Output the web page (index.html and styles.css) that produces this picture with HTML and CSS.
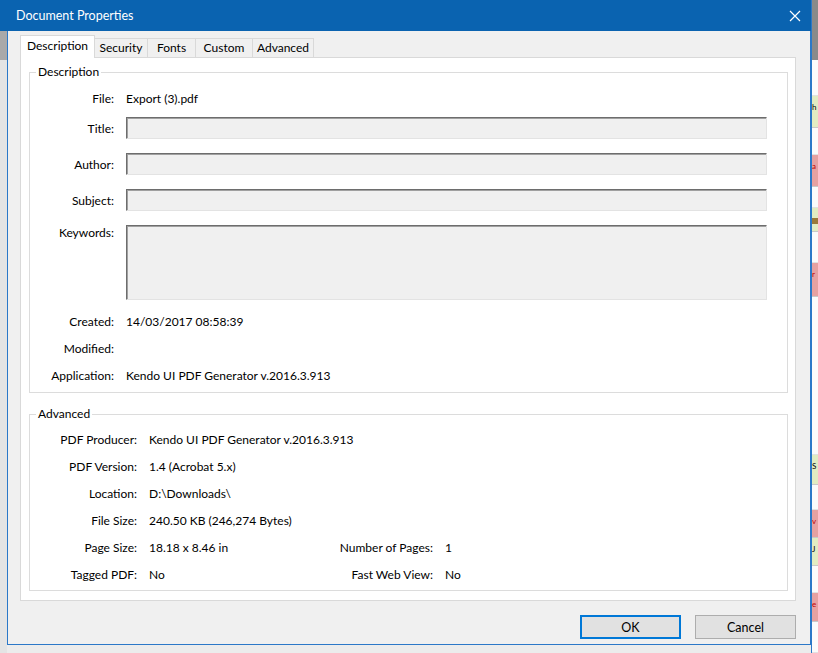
FILE: index.html
```html
<!DOCTYPE html>
<html lang="en">
<head>
    <meta charset="utf-8">
    <title>Document Properties</title>
    <link rel="stylesheet" href="styles.css">
</head>
<body>
    <div class="screen">
        <div class="window">
            <div class="titlebar">
                <span class="title">Document Properties</span>
                <svg class="close" width="12" height="12" viewBox="0 0 12 12">
                    <path d="M1 1 L11 11 M11 1 L1 11" stroke="#fff" stroke-width="1.2" fill="none"/>
                </svg>
            </div>
            <div class="frame">
                <div class="gutter"></div>
                <div class="dialog">
                    <div class="tabs">
                        <div class="tab tab-description active">Description</div>
                        <div class="tab tab-security">Security</div>
                        <div class="tab tab-fonts">Fonts</div>
                        <div class="tab tab-custom">Custom</div>
                        <div class="tab tab-advanced">Advanced</div>
                    </div>

                    <div class="panel">
                        <fieldset class="group desc">
                            <legend>Description</legend>
                            <div class="row first">
                                <span class="label">File:</span>
                                <span class="value">Export (3).pdf</span>
                            </div>
                            <div class="row input top">
                                <span class="label">Title:</span>
                                <div class="field"></div>
                            </div>
                            <div class="row input">
                                <span class="label">Author:</span>
                                <div class="field"></div>
                            </div>
                            <div class="row input">
                                <span class="label">Subject:</span>
                                <div class="field"></div>
                            </div>
                            <div class="row input keywords">
                                <span class="label">Keywords:</span>
                                <div class="field tall"></div>
                            </div>
                            <div class="row after">
                                <span class="label">Created:</span>
                                <span class="value">14/03/2017 08:58:39</span>
                            </div>
                            <div class="row">
                                <span class="label">Modified:</span>
                                <span class="value"></span>
                            </div>
                            <div class="row">
                                <span class="label">Application:</span>
                                <span class="value">Kendo UI PDF Generator v.2016.3.913</span>
                            </div>
                        </fieldset>

                        <fieldset class="group adv">
                            <legend>Advanced</legend>
                            <div class="adv-grid">
                                <span class="label">PDF Producer:</span>
                                <span class="value wide">Kendo UI PDF Generator v.2016.3.913</span>

                                <span class="label">PDF Version:</span>
                                <span class="value wide">1.4 (Acrobat 5.x)</span>

                                <span class="label">Location:</span>
                                <span class="value wide">D:\Downloads\</span>

                                <span class="label">File Size:</span>
                                <span class="value wide">240.50 KB (246,274 Bytes)</span>

                                <span class="label">Page Size:</span>
                                <span class="value">18.18 x 8.46 in</span>
                                <span class="label">Number of Pages:</span>
                                <span class="value">1</span>

                                <span class="label">Tagged PDF:</span>
                                <span class="value">No</span>
                                <span class="label">Fast Web View:</span>
                                <span class="value">No</span>
                            </div>
                        </fieldset>
                    </div>

                    <div class="buttons">
                        <button class="btn default">OK</button>
                        <button class="btn">Cancel</button>
                    </div>
                </div>
            </div>
        </div>

        <!-- what shows of the app behind the dialog -->
        <div class="backdrop">
            <div class="cell dark" style="height: 60px"></div>
            <div class="cell" style="height: 36px"></div>
            <div class="cell green" style="height: 32px">h</div>
            <div class="cell" style="height: 27px"></div>
            <div class="cell red" style="height: 32px">a</div>
            <div class="cell" style="height: 21px"></div>
            <div class="cell green bar" style="height: 24px"></div>
            <div class="cell" style="height: 31px"></div>
            <div class="cell red" style="height: 34px">r</div>
            <div class="cell" style="height: 158px"></div>
            <div class="cell green" style="height: 30px">S</div>
            <div class="cell" style="height: 25px"></div>
            <div class="cell red" style="height: 28px">v</div>
            <div class="cell green" style="height: 28px">J</div>
            <div class="cell" style="height: 27px"></div>
            <div class="cell red" style="height: 29px">e</div>
            <div class="cell" style="height: 31px"></div>
        </div>
    </div>
</body>
</html>
```

FILE: styles.css
```css
* {
    box-sizing: border-box;
}

body {
    margin: 0;
    font-family: 'Lato', 'Noto Sans', sans-serif;
    font-size: 12px;
    color: #000;
    background-color: #f0f0f0;
}

.screen {
    display: flex;
    width: 818px;
    height: 653px;
    overflow: hidden;
}

.window {
    width: 811px;
    display: flex;
    flex-direction: column;
}

.titlebar {
    height: 31px;
    background-color: #0a63b0;
    color: #fff;
    display: flex;
    align-items: center;
    justify-content: space-between;
    padding: 0 10px 0 16px;
}

.title {
    font-size: 12.5px;
}

.frame {
    flex: 1;
    display: flex;
    background-color: #ececec;
}

.gutter {
    width: 7px;
    background: linear-gradient(#a9a9a9 0 29px, #e4e4e4 29px);
}

.dialog {
    width: 804px;
    height: 614px;
    background-color: #f0f0f0;
    border: 1px solid #2b78c8;
    border-top: none;
    display: flex;
    flex-direction: column;
}

/* tab strip */
.tabs {
    display: flex;
    align-items: flex-end;
    padding: 4px 0 0 12px;
    height: 26px;
}

.tab {
    height: 19px;
    line-height: 18px;
    text-align: center;
    background-color: #f0f0f0;
    border: 1px solid #d9d9d9;
    border-bottom: none;
    margin-left: -1px;
}

.tab:first-child {
    margin-left: 0;
}

.tab.active {
    height: 23px;
    line-height: 19px;
    background-color: #fff;
    margin-bottom: -1px;
    position: relative;
    z-index: 1;
}

.tab-description { width: 75px; }
.tab-security { width: 54px; }
.tab-fonts { width: 49px; }
.tab-custom { width: 58px; }
.tab-advanced { width: 62px; }

.panel {
    height: 544px;
    margin: 0 14px 0 12px;
    background-color: #fff;
    border: 1px solid #d9d9d9;
    padding: 6px 7px 0 8px;
}

/* group boxes */
.group {
    margin: 0;
    border: 1px solid #dcdcdc;
    padding: 0 20px 6px 0;
}

.group legend {
    margin-left: 6px;
    padding: 0 2px;
    line-height: 16px;
}

.adv {
    margin-top: 13px;
    padding: 7px 0 5px 0;
}

.row {
    display: flex;
    align-items: center;
    min-height: 22px;
    margin-top: 5px;
}

.row.first {
    margin-top: 7px;
}

.row.input {
    margin-top: 14px;
}

.row.input.top {
    margin-top: 8px;
}

.row.after {
    margin-top: 10px;
}

.row.keywords {
    align-items: flex-start;
}

.row.keywords .label {
    line-height: 16px;
}

.label {
    text-align: right;
    white-space: nowrap;
}

.desc .label {
    width: 84px;
    margin-right: 12px;
}

.field {
    flex: 1;
    height: 22px;
    background-color: #f0f0f0;
    border: 1px solid;
    border-color: #6d6d6d #e3e3e3 #e3e3e3 #6d6d6d;
    box-shadow: inset 1px 1px 0 #a0a0a0;
}

.field.tall {
    height: 75px;
}

.adv-grid {
    display: grid;
    grid-template-columns: 107px 150px 122px 1fr;
    grid-auto-rows: 22px;
    column-gap: 12px;
    row-gap: 5px;
    align-items: center;
    margin-top: -1px;
}

.value.wide {
    grid-column: span 3;
}

/* dialog buttons */
.buttons {
    display: flex;
    justify-content: flex-end;
    gap: 14px;
    margin-top: 14px;
    padding-right: 14px;
}

.btn {
    width: 101px;
    height: 24px;
    font-family: inherit;
    font-size: 12.5px;
    color: #000;
    background-color: #e1e1e1;
    border: 1px solid #adadad;
    padding: 0;
}

.btn.default {
    border: 2px solid #0078d7;
}

/* app behind the dialog */
.backdrop {
    width: 7px;
    display: flex;
    flex-direction: column;
    background-color: #fff;
    border-left: 1px solid #2b78c8;
}

.cell {
    flex: none;
    font-size: 8px;
    line-height: 22px;
    white-space: nowrap;
    overflow: hidden;
    background-color: #fbfbfb;
    border-bottom: 1px solid #e2e2e2;
}

.cell.dark {
    background-color: #8a8a8a;
    border-bottom: none;
}

.cell.green {
    background-color: #e2ecc2;
    border-bottom-color: #c9c9c9;
}

.cell.red {
    background-color: #e6a1a1;
    color: #c00000;
    border-bottom-color: #c9c9c9;
}

.cell.bar {
    background: linear-gradient(#e2ecc2 0 10px, #9a7a3a 10px 16px, #e2ecc2 16px);
}
```
